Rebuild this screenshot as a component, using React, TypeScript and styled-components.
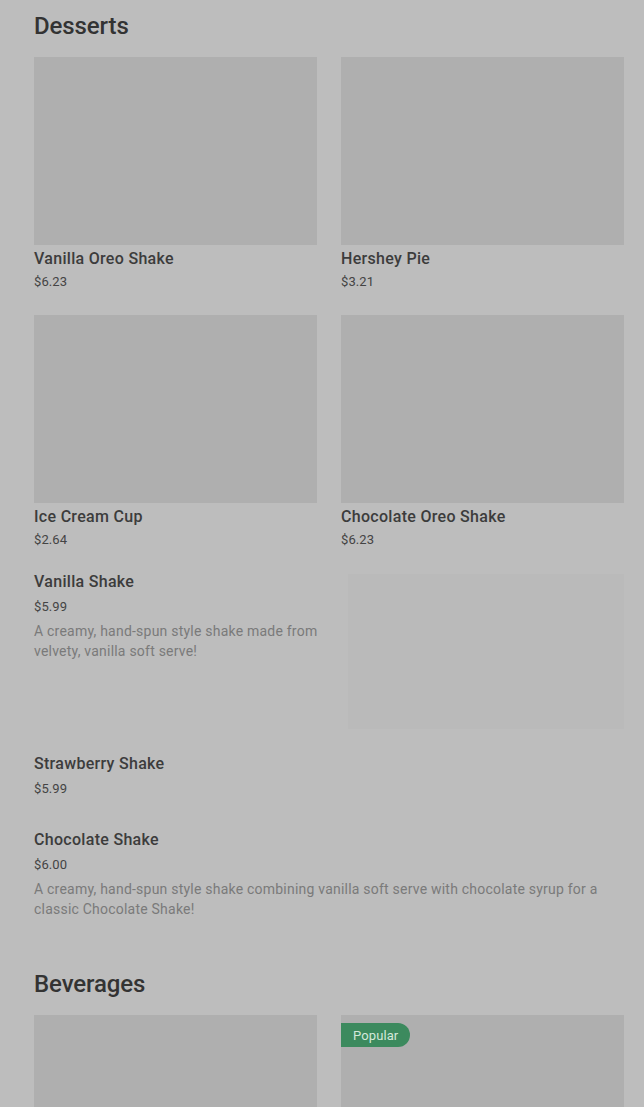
import React from "react";
import styled, { createGlobalStyle } from "styled-components";

const Global = createGlobalStyle`
  html, body { margin: 0; padding: 0; background: #bdbdbd; }
  body { font-family: Roboto, "Liberation Sans", Arial, sans-serif; color: #3a3a3a; }
  * { box-sizing: border-box; }
`;

const Page = styled.main`
  padding: 10px 20px 40px 34px;
  display: flex;
  flex-direction: column;
  gap: 17px;
`;

const Section = styled.section`
  display: flex;
  flex-direction: column;
`;

const Heading = styled.h2`
  margin: 0 0 15px;
  font-family: Roboto, "Liberation Sans", Arial, sans-serif;
  font-size: 24px;
  line-height: 32px;
  font-weight: 500;
  letter-spacing: -0.1px;
  color: #333333;
`;

const Grid = styled.div`
  display: grid;
  grid-template-columns: 1fr 1fr;
  column-gap: 24px;
  row-gap: 24px;
  margin-bottom: 23px;
`;

const Card = styled.div`
  display: flex;
  flex-direction: column;
`;

const Thumb = styled.div`
  position: relative;
  height: 188px;
  background: #afafaf;
`;

const Badge = styled.span`
  position: absolute;
  top: 8px;
  left: 0;
  height: 24px;
  padding: 0 12px;
  display: flex;
  align-items: center;
  background: #3c8a5e;
  color: #d3e8da;
  font-size: 13px;
  letter-spacing: 0.1px;
  border-radius: 0 12px 12px 0;
`;

const Name = styled.div<{ $top?: number }>`
  margin-top: ${(p) => p.$top ?? 4}px;
  font-size: 16px;
  line-height: 20px;
  font-weight: 500;
  letter-spacing: 0.3px;
  color: #3c3c3c;
`;

const Price = styled.div`
  margin-top: 4px;
  font-size: 13px;
  line-height: 18px;
  letter-spacing: 0.1px;
  color: #444444;
`;

const List = styled.div`
  display: flex;
  flex-direction: column;
`;

const Row = styled.div`
  display: flex;
  align-items: flex-start;
  gap: 18px;
`;

const Info = styled.div`
  flex: 1;
  display: flex;
  flex-direction: column;
  padding-bottom: 32px;
`;

const RowPrice = styled(Price)`
  margin-top: 6px;
`;

const Desc = styled.p`
  margin: 5px 0 0;
  font-size: 14px;
  line-height: 20px;
  letter-spacing: 0.22px;
  color: #7a7a7a;
`;

const RowImage = styled.div`
  flex: none;
  width: 276px;
  height: 155px;
  margin: 2px 0 25px;
  background: #bababa;
`;

type GridItem = { name: string; price: string; badge?: string };
type ListEntry = { name: string; price: string; desc?: string; image?: boolean };

const desserts: GridItem[] = [
  { name: "Vanilla Oreo Shake", price: "$6.23" },
  { name: "Hershey Pie", price: "$3.21" },
  { name: "Ice Cream Cup", price: "$2.64" },
  { name: "Chocolate Oreo Shake", price: "$6.23" },
];

const dessertList: ListEntry[] = [
  {
    name: "Vanilla Shake",
    price: "$5.99",
    desc: "A creamy, hand-spun style shake made from velvety, vanilla soft serve!",
    image: true,
  },
  { name: "Strawberry Shake", price: "$5.99" },
  {
    name: "Chocolate Shake",
    price: "$6.00",
    desc: "A creamy, hand-spun style shake combining vanilla soft serve with chocolate syrup for a classic Chocolate Shake!",
  },
];

const beverages: GridItem[] = [
  { name: "Coca-Cola", price: "$2.49" },
  { name: "Sweet Tea", price: "$1.99", badge: "Popular" },
];

export default function App() {
  return (
    <>
      <Global />
      <Page>
        <Section>
          <Heading>Desserts</Heading>
          <Grid>
            {desserts.map((d) => (
              <Card key={d.name}>
                <Thumb />
                <Name>{d.name}</Name>
                <Price>{d.price}</Price>
              </Card>
            ))}
          </Grid>
          <List>
            {dessertList.map((d) => (
              <Row key={d.name}>
                <Info>
                  <Name $top={0}>{d.name}</Name>
                  <RowPrice>{d.price}</RowPrice>
                  {d.desc && <Desc>{d.desc}</Desc>}
                </Info>
                {d.image && <RowImage />}
              </Row>
            ))}
          </List>
        </Section>
        <Section>
          <Heading>Beverages</Heading>
          <Grid>
            {beverages.map((d) => (
              <Card key={d.name}>
                <Thumb>{d.badge && <Badge>{d.badge}</Badge>}</Thumb>
                <Name>{d.name}</Name>
                <Price>{d.price}</Price>
              </Card>
            ))}
          </Grid>
        </Section>
      </Page>
    </>
  );
}
